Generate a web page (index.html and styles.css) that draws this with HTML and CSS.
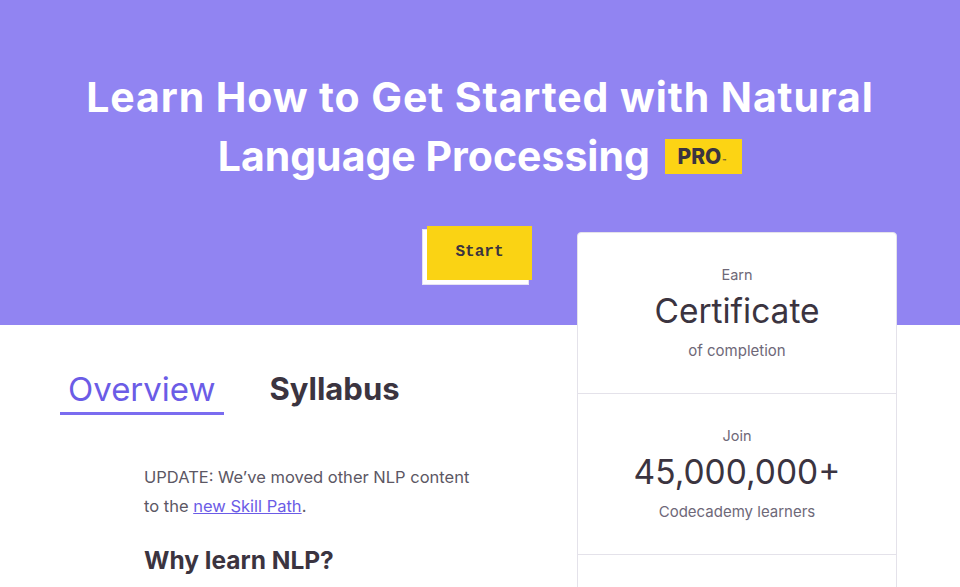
FILE: index.html
```html
<!DOCTYPE html>
<html lang="en">
<head>
<meta charset="utf-8">
<title>Learn How to Get Started with Natural Language Processing</title>
<link rel="stylesheet" href="styles.css">
</head>
<body>
<div class="page">
  <header class="hero">
    <h1 class="hero-title">Learn How to Get Started with Natural<br><span class="title-line2">Language Processing</span> <span class="pro">PRO<span class="pro-mark">™</span></span></h1>
  </header>
  <div class="layout">
    <main class="main">
      <div class="start-row">
        <button class="start-btn">Start</button>
      </div>
      <nav class="tabs">
        <span class="tab tab-active">Overview</span>
        <span class="tab">Syllabus</span>
      </nav>
      <section class="content">
        <p class="update">UPDATE: We’ve moved other NLP content<br>to the <a href="#" class="link">new Skill Path</a>.</p>
        <h2 class="why">Why learn NLP?</h2>
      </section>
    </main>
    <aside class="card">
      <div class="card-section">
        <div class="card-small">Earn</div>
        <div class="card-big">Certificate</div>
        <div class="card-sub">of completion</div>
      </div>
      <div class="card-section">
        <div class="card-small">Join</div>
        <div class="card-big">45,000,000+</div>
        <div class="card-sub">Codecademy learners</div>
      </div>
      <div class="card-section card-empty"></div>
    </aside>
  </div>
</div>
</body>
</html>
```
FILE: styles.css
```css
html, body {
  margin: 0;
  padding: 0;
}
body {
  font-family: "Inter", "Liberation Sans", sans-serif;
  color: #3b3440;
  background: #ffffff;
  overflow: hidden;
}
.page {
  width: 960px;
  height: 587px;
  overflow: hidden;
  background: linear-gradient(#9184f2 0, #9184f2 325px, #ffffff 325px);
}
.hero {
  padding-top: 68px;
  text-align: center;
}
.hero-title {
  margin: 0;
  font-size: 41px;
  line-height: 59px;
  font-weight: 700;
  color: #ffffff;
  letter-spacing: 0.9px;
}
.title-line2 {
  letter-spacing: 0;
}
.pro {
  display: inline-block;
  vertical-align: middle;
  position: relative;
  top: -3px;
  margin-left: 4px;
  background: #fcd414;
  color: #3b3440;
  font-size: 21px;
  line-height: 35px;
  height: 35px;
  padding: 0 16px 0 13px;
  font-weight: 800;
  letter-spacing: 0;
}
.pro-mark {
  font-size: 6px;
  vertical-align: baseline;
  margin-left: 1px;
}
.layout {
  margin-top: 40px;
  display: grid;
  grid-template-columns: 532px 320px;
  column-gap: 45px;
  align-items: start;
}
.main {
  display: flex;
  flex-direction: column;
}
.start-row {
  display: flex;
  justify-content: flex-end;
}
.start-btn {
  width: 105px;
  height: 54px;
  border: none;
  background: #fad314;
  box-shadow: -4px 4px 0 #ffffff, -4px 4px 0 1px #e6e3f3;
  font-family: "Liberation Mono", "Courier New", monospace;
  font-weight: 700;
  font-size: 16px;
  color: #3b3440;
  padding: 0 0 2px 0;
  cursor: pointer;
}
.tabs {
  display: flex;
  gap: 38px;
  margin-top: 91px;
  padding-left: 60px;
}
.tab {
  padding: 0 8px 5px 8px;
  font-size: 31px;
  line-height: 36px;
  font-weight: 700;
  color: #3b3440;
}
.tab-active {
  font-size: 33px;
  font-weight: 400;
  color: #6b5ce6;
  border-bottom: 3px solid #7a6cf0;
}
.content {
  padding-left: 144px;
  margin-top: 48px;
}
.update {
  margin: 0;
  font-size: 16.5px;
  line-height: 29px;
  color: #5c5764;
}
.link {
  color: #6b5ce6;
  text-decoration: underline;
}
.why {
  margin: 24px 0 0 0;
  font-size: 24.5px;
  line-height: 30px;
  font-weight: 700;
  color: #3b3440;
}
.card {
  margin-top: 6px;
  background: #ffffff;
  border: 1px solid #e4e2ea;
  border-radius: 4px;
  display: flex;
  flex-direction: column;
}
.card-section {
  height: 160px;
  display: flex;
  flex-direction: column;
  align-items: center;
  justify-content: center;
  border-bottom: 1px solid #e4e2ea;
}
.card-empty {
  height: 80px;
  border-bottom: none;
}
.card-small {
  font-size: 14.5px;
  line-height: 18px;
  color: #6e6878;
}
.card-big {
  font-size: 33.5px;
  line-height: 40px;
  margin: 7px 0 11px;
  color: #3b3440;
  font-weight: 400;
}
.card-sub {
  font-size: 15px;
  line-height: 18px;
  color: #6e6878;
}
```
